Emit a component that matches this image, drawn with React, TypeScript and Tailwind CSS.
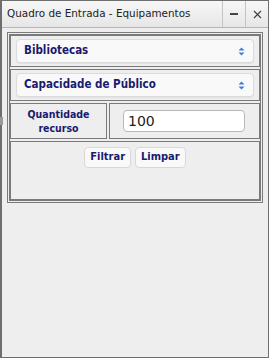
import { useState } from "react";

function Arrows() {
  return (
    <svg width="7" height="9" viewBox="0 0 7 9" className="shrink-0">
      <path d="M3.5 0.5 L6.5 3.5 L0.5 3.5 Z" fill="#3b7fd4" />
      <path d="M3.5 8.5 L6.5 5.5 L0.5 5.5 Z" fill="#3b7fd4" />
    </svg>
  );
}

const cond = { fontFamily: "'DejaVu Sans Condensed', 'DejaVu Sans', sans-serif", fontStretch: "condensed" };

function SelectRow({ label }: { label: string }) {
  return (
    <div className="border border-[#7a7a7a] px-[5px] py-[3px]">
      <div className="flex h-[24px] items-center justify-between rounded-[4px] border border-[#dcdcdc] bg-[#f9f9f9] pl-[7px] pr-[8px] shadow-[0_1px_1px_rgba(0,0,0,0.06)]">
        <span className="text-[11.5px] font-bold text-[#1a1a6e]" style={cond}>
          {label}
        </span>
        <Arrows />
      </div>
    </div>
  );
}

export default function App() {
  const [qty, setQty] = useState("100");

  return (
    <div
      className="relative flex h-[358px] w-[269px] flex-col border border-l-2 border-[#6e6e6e] bg-[#eeeeee]"
      style={{ fontFamily: "'DejaVu Sans', sans-serif" }}
    >
      <div className="flex h-[27px] items-center border-b border-[#b5b5b5] bg-gradient-to-b from-[#f7f7f7] to-[#e6e6e6]">
        <span className="flex-1 pl-[5px] text-[10.4px] text-[#222]">
          Quadro de Entrada - Equipamentos
        </span>
        <div className="flex h-full w-[23px] items-center justify-center border-l border-[#c4c4c4]">
          <div className="h-[2px] w-[8px] bg-[#444]" />
        </div>
        <div className="flex h-full w-[23px] items-center justify-center border-l border-[#c4c4c4]">
          <svg width="9" height="9" viewBox="0 0 9 9">
            <path d="M1 1 L8 8 M8 1 L1 8" stroke="#444" strokeWidth="1.2" />
          </svg>
        </div>
      </div>

      <div className="px-[5px] pt-[4px]">
        <div className="border border-[#7a7a7a] p-[1px]">
          <div className="flex flex-col gap-[2px] border border-[#7a7a7a] bg-[#eeeeee]">
            <SelectRow label="Bibliotecas" />
            <SelectRow label="Capacidade de Público" />
            <div className="flex gap-[2px]">
              <div
                className="flex h-[36px] w-[97px] items-center justify-center border border-[#7a7a7a] text-center text-[10.5px] font-bold leading-[14px] text-[#1a1a6e]"
                style={cond}
              >
                Quantidade
                <br />
                recurso
              </div>
              <div className="flex flex-1 items-center border border-[#7a7a7a] pl-[13px] pr-[14px]">
                <input
                  value={qty}
                  onChange={(e) => setQty(e.target.value)}
                  className="h-[22px] w-full rounded-[4px] border border-[#b8b8b8] bg-white px-[4px] text-[14px] text-[#222] outline-none"
                />
              </div>
            </div>
            <div className="flex h-[59px] items-start justify-center gap-[4px] border border-[#7a7a7a] pt-[5px]">
              <button
                className="h-[21px] rounded-[4px] border border-[#d8d8d8] bg-[#f9f9f9] px-[5px] text-[11px] font-bold text-[#1a1a6e]"
                style={cond}
              >
                Filtrar
              </button>
              <button
                className="h-[21px] rounded-[4px] border border-[#d8d8d8] bg-[#f9f9f9] px-[5px] text-[11px] font-bold text-[#1a1a6e]"
                style={cond}
              >
                Limpar
              </button>
            </div>
          </div>
        </div>
      </div>

      <div className="absolute left-[-2px] top-[116px] h-[8px] w-[3px] bg-[#999]" />
    </div>
  );
}
